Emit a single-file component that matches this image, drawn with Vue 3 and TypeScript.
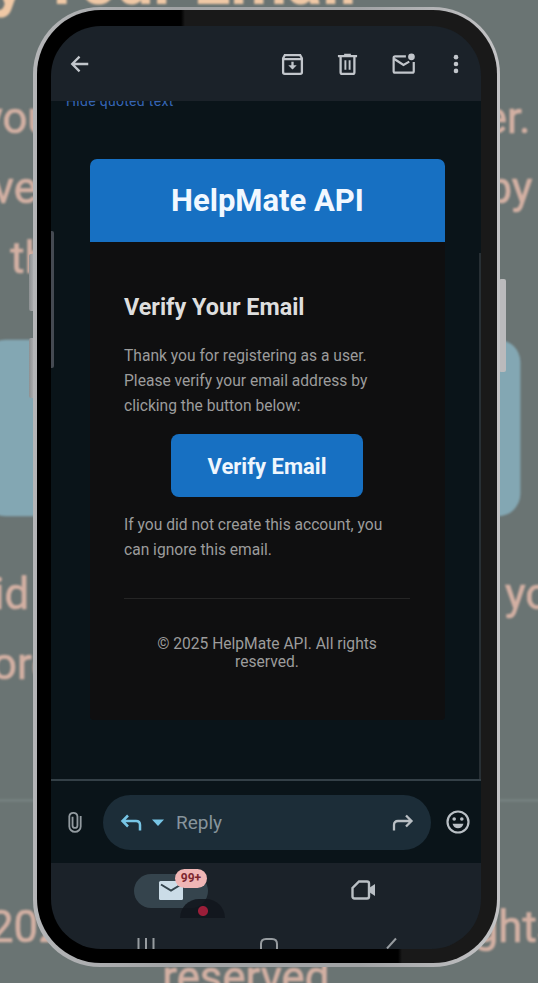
<script setup lang="ts">
const bodyLines: string[] = [
  'Thank you for registering as a user.',
  'Please verify your email address by',
  'clicking the button below:',
]
const noticeLines: string[] = ['If you did not create this account, you', 'can ignore this email.']
const footerLines: string[] = ['© 2025 HelpMate API. All rights', 'reserved.']
</script>

<template>
  <main class="stage">
    <div class="backdrop" aria-hidden="true">
      <div class="mail">
        <div class="mail-head"></div>
        <div class="mail-body">
          <h2>Verify Your Email</h2>
          <p><span v-for="l in bodyLines" :key="l">{{ l }}</span></p>
          <div class="cta"></div>
          <p><span v-for="l in noticeLines" :key="l">{{ l }}</span></p>
          <footer><span v-for="l in footerLines" :key="l">{{ l }}</span></footer>
        </div>
      </div>
    </div>

    <i class="key volume-up"></i>
    <i class="key volume-down"></i>
    <i class="key power"></i>

    <section class="phone">
      <div class="bezel">
        <div class="screen">
          <header class="appbar">
            <svg class="back" viewBox="0 0 24 24"><path d="M21 12H4M11.500 4L3.500 12l8 8" fill="none" stroke="currentColor" stroke-width="2.500" /></svg>
            <div class="actions">
              <svg viewBox="0 0 24 24" fill="none" stroke="currentColor" stroke-width="2.400"><path d="M2.200 5.500L4 2.200h16l1.800 3.300V20q0 1.700-1.700 1.700H3.900Q2.200 21.700 2.200 20zM2.200 6.400h19.600" /><path d="M12 9v7" /><path d="M7.600 12.800h8.800L12 17.300z" fill="currentColor" stroke="none" /></svg>
              <svg viewBox="0 0 24 24" fill="none" stroke="currentColor" stroke-width="2.400"><path d="M2 3.200h20M8.500 2h7M4.800 4v16q0 1.800 1.800 1.800h10.800q1.800 0 1.800-1.800V4" /><path d="M9.800 7.500v10M14.200 7.500v10" stroke-width="2" /></svg>
              <svg class="unread" viewBox="0 0 26 24" fill="none" stroke="currentColor" stroke-width="2.300"><path d="M15.500 3.500H4.200q-1.500 0-1.500 1.500v14q0 1.500 1.500 1.500h18q1.500 0 1.500-1.500V9.500" /><path d="M3 6l10 6.500 6-3.500" /><circle cx="21.300" cy="4" r="3.500" fill="currentColor" stroke="none" /></svg>
              <svg class="dots" viewBox="0 0 8 24" fill="currentColor"><circle cx="4" cy="4.500" r="2.500" /><circle cx="4" cy="12" r="2.500" /><circle cx="4" cy="19.500" r="2.500" /></svg>
            </div>
          </header>

          <div class="reader">
            <div class="quoted"><span>Hide quoted text</span></div>
            <article class="mail">
              <h1 class="mail-head">HelpMate API</h1>
              <div class="mail-body">
                <h2>Verify Your Email</h2>
                <p><span v-for="l in bodyLines" :key="l">{{ l }}</span></p>
                <button class="cta">Verify Email</button>
                <p><span v-for="l in noticeLines" :key="l">{{ l }}</span></p>
                <footer><span v-for="l in footerLines" :key="l">{{ l }}</span></footer>
              </div>
            </article>
            <i class="edge-panel"></i>
            <i class="scroll-edge"></i>
          </div>

          <div class="reply-row">
            <svg class="clip" viewBox="0 0 16 24" fill="none" stroke="currentColor" stroke-width="2.100"><path d="M14.500 5v12a6.500 6.200 0 0 1-13 0V5.500a4.700 4.500 0 0 1 9.300 0V16a2.800 2.800 0 0 1-5.600 0V6" /></svg>
            <div class="reply-pill">
              <svg class="arrow cyan" viewBox="0 0 22 18" fill="none" stroke="currentColor" stroke-width="2.500"><path d="M8 1.500L2.500 7 8 12.500M2.500 7H16q4 0 4 4v5.500" /></svg>
              <svg class="caret" viewBox="0 0 12 7" fill="currentColor"><path d="M0 .5h12L6 7z" /></svg>
              <span class="reply-text">Reply</span>
              <svg class="arrow forward" viewBox="0 0 22 18" fill="none" stroke="currentColor" stroke-width="2.300"><path d="M14 1.500L19.500 7 14 12.500M19.500 7H6Q2 7 2 11v5.500" /></svg>
            </div>
            <svg class="smile" viewBox="0 0 24 24" fill="none" stroke="currentColor" stroke-width="2.200"><circle cx="12" cy="12" r="10.500" /><g fill="currentColor" stroke="none"><circle cx="8.200" cy="9" r="1.800" /><circle cx="15.800" cy="9" r="1.800" /><path d="M6.500 13.700h11q-1.500 4.600-5.500 4.600t-5.500-4.600z" /></g></svg>
          </div>

          <nav class="tabs">
            <div class="tab-mail">
              <svg viewBox="0 0 24 19"><rect width="24" height="19" rx="1.500" fill="#cbdce7" /><path d="M2 3.500l10 6 10-6" fill="none" stroke="#34444d" stroke-width="2" /></svg>
              <i class="recorder"></i>
              <b class="badge">99+</b>
            </div>
            <svg class="tab-video" viewBox="0 0 25 20"><path d="M8 1.500h8q2 0 2 2v13q0 2-2 2H3.500q-2 0-2-2V8z" fill="none" stroke="currentColor" stroke-width="2.400" /><path d="M18 8l6-4v12l-6-4z" fill="currentColor" /></svg>
          </nav>
          <div class="system-keys">
            <svg viewBox="0 0 18 11"><path d="M1.500 0v11M9 0v11M16.500 0v11" /></svg>
            <svg viewBox="0 0 18 11"><path d="M1 11V6q0-5 5-5h6q5 0 5 5v5" /></svg>
            <svg viewBox="0 0 18 11"><path d="M14 .5L5 10.500" /></svg>
          </div>
        </div>
      </div>
    </section>
  </main>
</template>

<style>
body {
  margin: 0;
}
</style>

<style scoped>
* {
  box-sizing: border-box;
}
.stage {
  position: relative;
  width: 538px;
  height: 983px;
  padding: 7px 0 0 33px;
  overflow: hidden;
  background: #6a7473;
  font-family: Roboto, 'Liberation Sans', sans-serif;
}
svg {
  display: block;
  flex: none;
  overflow: visible;
}

.key {
  position: absolute;
  width: 6px;
  background: linear-gradient(90deg, #8d9092, #b6b7b9);
  border-radius: 2px;
}
.volume-up {
  left: 29px;
  top: 254px;
  height: 57px;
}
.volume-down {
  left: 29px;
  top: 338px;
  height: 60px;
}
.power {
  left: 499px;
  top: 279px;
  height: 93px;
  width: 7px;
  background: #bababc;
}

.phone {
  position: relative;
  width: 467px;
  height: 960px;
  padding: 3px 3px 4px 4px;
  border-radius: 67px;
  background: linear-gradient(90deg, #b4b5b7, #a1a3a5 30%, #a1a3a5 70%, #c3c3c5);
}
.bezel {
  height: 100%;
  padding: 16px 16px 14px 14px;
  border-radius: 64px;
  background:
    linear-gradient(90deg, #000 361px, #191919 365px) bottom / 100% 300px no-repeat,
    linear-gradient(90deg, #000 144px, #191919 148px);
}
.screen {
  display: flex;
  flex-direction: column;
  width: 430px;
  height: 923px;
  overflow: hidden;
  border-radius: 50px;
  background: #1b2229;
}

.appbar {
  display: flex;
  flex: 0 0 75px;
  align-items: center;
  justify-content: space-between;
  padding: 1px 20px 0 18px;
  color: #c2c6cb;
}
.back {
  width: 22px;
  height: 22px;
}
.actions {
  display: flex;
  align-items: center;
}
.actions svg {
  width: 23px;
  height: 23px;
  margin-right: 32px;
}
.actions .unread {
  width: 25px;
  height: 23px;
  margin-right: 36px;
}
.actions .dots {
  width: 8px;
  height: 22px;
  margin-right: 1px;
}

.reader {
  position: relative;
  flex: 0 0 680px;
  padding: 0 36px 0 39px;
  overflow: hidden;
  background: #0a1419;
  border-bottom: 2px solid #344047;
}
.quoted {
  height: 58px;
  margin-left: -24px;
  overflow: hidden;
  color: #3665b5;
  font-size: 14px;
  line-height: 18px;
}
.quoted span {
  display: block;
  margin-top: -9px;
  letter-spacing: 0.300px;
}
.mail {
  width: 355px;
  height: 561px;
  background: #0f0f10;
  border-radius: 8px 8px 4px 4px;
}
.mail-head {
  display: flex;
  align-items: center;
  justify-content: center;
  height: 83px;
  margin: 0;
  background: #1770c2;
  border-radius: 7px 7px 0 0;
  color: #f1f8ff;
  font-size: 31px;
}
.mail-body {
  padding: 50px 35px 0 34px;
}
.mail h2 {
  margin: 0;
  color: #dedede;
  font-size: 23.350px;
  line-height: 30px;
  white-space: nowrap;
}
.mail p {
  margin: 22px 0 0;
  color: #9c9c9c;
  font-size: 15.600px;
  line-height: 25px;
  white-space: nowrap;
}
.mail p span,
.mail footer span {
  display: block;
}
.cta {
  display: flex;
  align-items: center;
  justify-content: center;
  width: 192px;
  height: 63px;
  margin: 15px 0 0 47px;
  padding: 1px 0 0;
  border: 0;
  border-radius: 8px;
  background: #1770c2;
  color: #eff6fd;
  font: bold 22px Roboto, sans-serif;
}
.mail .cta + p {
  margin-top: 16px;
}
.mail footer {
  margin-top: 35px;
  padding-top: 36px;
  border-top: 1px solid #252525;
  color: #9c9c9c;
  font-size: 15.600px;
  line-height: 18px;
  text-align: center;
  white-space: nowrap;
}

/* Enlarged, washed-out copy of the mail behind the device */
.backdrop {
  position: absolute;
  left: -244px;
  top: -432.600px;
  transform: scale(2.800);
  transform-origin: 0 0;
  filter: blur(0.450px);
}
.backdrop .mail,
.backdrop .mail-head {
  background: none;
}
.backdrop .mail h2 {
  color: #efc8a5;
}
.backdrop .mail p,
.backdrop .mail footer {
  color: #d3b0a3;
  -webkit-text-stroke: 0.250px #d3b0a3;
}
.backdrop .cta {
  margin-top: 16px;
  background: #83a7b3;
}
.backdrop .mail footer {
  border-color: #75817f;
}

.edge-panel {
  position: absolute;
  left: 0;
  top: 130px;
  width: 3px;
  height: 137px;
  border-radius: 0 2px 2px 0;
  background: #454a52;
}
.scroll-edge {
  position: absolute;
  right: 0;
  top: 152px;
  bottom: 0;
  width: 2px;
  background: #272f34;
}

.reply-row {
  display: flex;
  flex: 0 0 82px;
  align-items: center;
  padding: 0 11px 0 17px;
  background: #0a1419;
  color: #b9bfc4;
}
.clip {
  width: 14px;
  height: 24px;
  color: #929a9f;
}
.reply-pill {
  display: flex;
  align-items: center;
  width: 328px;
  height: 55px;
  margin: 1px 15px 0 21px;
  padding: 0 17px;
  border-radius: 28px;
  background: #1c2d38;
}
.arrow {
  width: 22px;
  height: 18px;
}
.cyan {
  color: #77c5e5;
}
.caret {
  width: 12px;
  height: 7px;
  margin: 0 12px 0 10px;
  color: #77c5e5;
}
.reply-text {
  color: #87949c;
  font-size: 19px;
}
.forward {
  margin-left: auto;
}
.smile {
  width: 24px;
  height: 24px;
}

.tabs {
  display: flex;
  flex: 0 0 75px;
  align-items: flex-start;
  padding: 11px 105px 0 83px;
  justify-content: space-between;
  color: #b9bfc4;
}
.tab-mail {
  position: relative;
  display: flex;
  align-items: center;
  justify-content: center;
  width: 74px;
  height: 34px;
  border-radius: 17px;
  background: #35444d;
}
.tab-mail svg {
  width: 24px;
  height: 19px;
  margin-top: -1px;
}
.badge {
  position: absolute;
  left: 41px;
  top: -5px;
  width: 32px;
  height: 19px;
  border-radius: 10px;
  background: #f0b6b5;
  color: #7d2830;
  font-size: 12px;
  line-height: 19px;
  text-align: center;
}
.recorder {
  position: absolute;
  left: 46px;
  top: 25px;
  width: 45px;
  height: 19px;
  border-radius: 22px 22px 0 0;
  background: radial-gradient(circle at 23px 12px, #9b1e39 4.500px, transparent 5.500px), #11161de0;
}
.tab-video {
  width: 25px;
  height: 20px;
  margin-top: 6px;
}

.system-keys {
  display: flex;
  justify-content: space-between;
  padding: 0 81px 0 86px;
}
.system-keys svg {
  width: 18px;
  height: 11px;
  fill: none;
  stroke: #979ca0;
  stroke-width: 2;
}
</style>
